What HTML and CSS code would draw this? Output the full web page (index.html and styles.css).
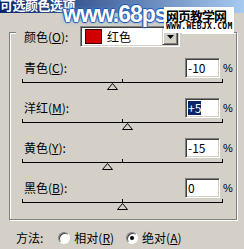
FILE: index.html
```html
<!DOCTYPE html>
<html lang="zh-CN">

<head>
  <meta charset="UTF-8">
  <meta name="viewport" content="width=device-width, initial-scale=1.0">
  <title>可选颜色选项</title>
  <link rel="stylesheet" href="styles.css">
</head>

<body>
  <div class="dialog">
    <div class="titlebar">
      <span class="title_text">可选颜色选项</span>
    </div>

    <div class="watermark">
      <div class="wm_site">www.68ps.</div>
      <div class="wm_box">
        <div class="wm_cn">网页教学网</div>
        <div class="wm_en">WWW.WEBJX.COM</div>
      </div>
    </div>

    <div class="group">
      <div class="legend">
        <span class="label">颜色(<u>O</u>):</span>
        <div class="select">
          <span class="swatch"></span>
          <span class="select_text">红色</span>
          <span class="select_btn">
            <svg width="7" height="4" viewBox="0 0 7 4"><polygon points="0,0 7,0 3.5,4" fill="#000" /></svg>
          </span>
        </div>
      </div>

      <div class="rows">
        <div class="row">
          <div class="row_top">
            <span class="label">青色(<u>C</u>):</span>
            <div class="input">-10</div>
            <span class="pct">%</span>
          </div>
          <div class="slider">
            <div class="track">
              <svg class="thumb" style="left: 84px" width="11" height="7" viewBox="0 0 11 7"><polygon points="5.5,0.5 10.5,6.5 0.5,6.5" fill="#d4d0c8" stroke="#000" /></svg>
            </div>
          </div>
        </div>

        <div class="row">
          <div class="row_top">
            <span class="label">洋红(<u>M</u>):</span>
            <div class="input"><span class="selected">+5</span></div>
            <span class="pct">%</span>
          </div>
          <div class="slider">
            <div class="track">
              <svg class="thumb" style="left: 99px" width="11" height="7" viewBox="0 0 11 7"><polygon points="5.5,0.5 10.5,6.5 0.5,6.5" fill="#d4d0c8" stroke="#000" /></svg>
            </div>
          </div>
        </div>

        <div class="row">
          <div class="row_top">
            <span class="label">黄色(<u>Y</u>):</span>
            <div class="input">-15</div>
            <span class="pct">%</span>
          </div>
          <div class="slider">
            <div class="track">
              <svg class="thumb" style="left: 79px" width="11" height="7" viewBox="0 0 11 7"><polygon points="5.5,0.5 10.5,6.5 0.5,6.5" fill="#d4d0c8" stroke="#000" /></svg>
            </div>
          </div>
        </div>

        <div class="row">
          <div class="row_top">
            <span class="label">黑色(<u>B</u>):</span>
            <div class="input">0</div>
            <span class="pct">%</span>
          </div>
          <div class="slider">
            <div class="track">
              <svg class="thumb" style="left: 94px" width="11" height="7" viewBox="0 0 11 7"><polygon points="5.5,0.5 10.5,6.5 0.5,6.5" fill="#d4d0c8" stroke="#000" /></svg>
            </div>
          </div>
        </div>
      </div>
    </div>

    <div class="method">
      <span class="method_label">方法:</span>
      <span class="radio radio_1"></span>
      <span class="radio_text">相对(<u>R</u>)</span>
      <span class="radio radio_2 checked"></span>
      <span class="radio_text">绝对(<u>A</u>)</span>
    </div>
  </div>
</body>

</html>
```

FILE: styles.css
```css
body {
  margin: 0;
  background-color: #d4d0c8;
  font-family: "Noto Sans CJK SC", sans-serif;
  font-size: 12px;
  color: #000;
  overflow: hidden;
}

.dialog {
  width: 244px;
  height: 249px;
  position: relative;
}

u {
  text-decoration: underline;
  text-underline-offset: 1px;
}

/* title */
.titlebar {
  height: 13px;
  overflow: hidden;
  background: linear-gradient(to right, #0a246a, #a6caf0);
}

.title_text {
  display: block;
  margin-top: -2px;
  line-height: 13px;
  font-size: 13px;
  font-weight: bold;
  letter-spacing: -0.5px;
  color: white;
}

/* watermark */
.watermark {
  position: absolute;
  left: 63px;
  top: 3px;
  width: 181px;
  height: 30px;
}

.wm_site {
  position: absolute;
  left: 0;
  top: 0;
  font-family: "Liberation Sans", sans-serif;
  font-weight: bold;
  font-size: 23px;
  line-height: 22px;
  letter-spacing: -1px;
  color: white;
  text-shadow: 1px 0 1px #1a56b0, -1px 0 1px #1a56b0, 0 1px 1px #1a56b0, 0 -1px 1px #1a56b0, 0 0 4px #6aa0e0;
}

.wm_box {
  position: absolute;
  left: 101px;
  top: 4px;
  width: 70px;
  padding: 1px 0 2px 2px;
  box-sizing: border-box;
  background-color: white;
}

.wm_cn {
  font-size: 13px;
  line-height: 15px;
  font-weight: bold;
  letter-spacing: -1px;
}

.wm_en {
  font-family: "DejaVu Sans Mono", monospace;
  font-size: 8px;
  line-height: 8px;
  font-weight: bold;
  letter-spacing: 0.3px;
}

/* group box */
.group {
  width: 228px;
  height: 188px;
  margin: 19px 0 0 9px;
  box-sizing: border-box;
  border: 1px solid #808080;
  box-shadow: inset 1px 1px 0 #fff, 1px 1px 0 #fff;
}

.legend {
  width: 166px;
  height: 21px;
  margin: -7px 0 0 6px;
  padding: 0 2px 0 8px;
  box-sizing: border-box;

  display: flex;
  align-items: center;

  background-color: #d4d0c8;
}

.legend .label {
  flex: 1;
  line-height: 14px;
}

.select {
  width: 100px;
  height: 21px;
  box-sizing: border-box;

  display: flex;
  align-items: center;

  border: 1px solid;
  border-color: #808080 #fff #fff #808080;
  box-shadow: inset 1px 1px 0 #404040, inset -1px -1px 0 #d4d0c8;
  background-color: white;
}

.swatch {
  width: 17px;
  height: 15px;
  margin-left: 4px;
  box-sizing: border-box;
  border: 1px solid #400000;
  background-color: #d00000;
}

.select_text {
  flex: 1;
  margin-left: 5px;
  line-height: 14px;
}

.select_btn {
  width: 16px;
  height: 17px;
  margin-right: 1px;
  box-sizing: border-box;

  display: flex;
  justify-content: center;
  align-items: center;

  border: 1px solid;
  border-color: #d4d0c8 #404040 #404040 #d4d0c8;
  box-shadow: inset 1px 1px 0 #fff, inset -1px -1px 0 #808080;
  background-color: #d4d0c8;
}

.select_btn svg {
  display: block;
}

/* slider rows */
.rows {
  margin-top: 11px;
}

.row {
  height: 40px;
}

.row_top {
  height: 20px;
  padding: 0 5px 0 14px;

  display: flex;
  align-items: center;
}

.row_top .label {
  flex: 1;
  line-height: 14px;
}

.input {
  width: 35px;
  height: 20px;
  padding-left: 2px;
  box-sizing: border-box;

  display: flex;
  align-items: center;

  border: 1px solid;
  border-color: #808080 #fff #fff #808080;
  box-shadow: inset 1px 1px 0 #404040, inset -1px -1px 0 #d4d0c8;
  background-color: white;
  line-height: 14px;
}

.selected {
  background-color: #0a246a;
  color: white;
}

.pct {
  width: 8px;
  margin-left: 3px;
  line-height: 14px;
  font-family: "Liberation Sans", sans-serif;
  font-size: 11px;
}

.slider {
  height: 20px;
  padding-top: 1px;
  box-sizing: border-box;
}

.track {
  width: 201px;
  height: 4px;
  margin-left: 12px;
  box-sizing: border-box;
  position: relative;

  border: 1px solid #000;
  border-top: none;
}

.track::after {
  content: "";
  position: absolute;
  left: 99px;
  top: 0;
  width: 1px;
  height: 3px;
  background-color: #000;
}

.thumb {
  position: absolute;
  top: 4px;
  display: block;
}

/* method */
.method {
  height: 18px;
  margin-top: 9px;
  padding-left: 16px;

  display: flex;
  align-items: center;
  line-height: 14px;
}

.radio {
  width: 12px;
  height: 12px;
  box-sizing: border-box;
  position: relative;

  border: 1px solid;
  border-color: #808080 #fff #fff #808080;
  border-radius: 50%;
  box-shadow: inset 1px 1px 0 #404040;
  background-color: white;
}

.radio_1 {
  margin-left: 15px;
}

.radio_2 {
  margin-left: 12px;
}

.checked::after {
  content: "";
  position: absolute;
  left: 3px;
  top: 3px;
  width: 4px;
  height: 4px;
  border-radius: 50%;
  background-color: #000;
}

.radio_text {
  margin-left: 4px;
}
```
